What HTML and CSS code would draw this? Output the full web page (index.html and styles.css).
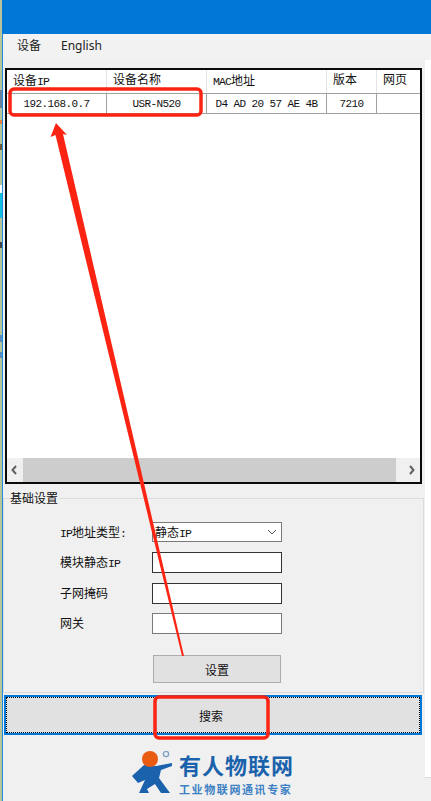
FILE: index.html
```html
<!DOCTYPE html>
<html lang="zh-CN">
<head>
<meta charset="utf-8">
<title>USR-M0</title>
<link rel="stylesheet" href="styles.css">
</head>
<body>
<div class="screen">
  <div class="desktop"></div>
  <div class="window">
    <header class="titlebar"></header>
    <nav class="menubar"><span class="menu-item">设备</span><span class="menu-item">English</span></nav>
    <section class="list">
      <div class="row head">
        <span class="c c1">设备<span class="lat">IP</span></span><span class="c c2">设备名称</span><span class="c c3"><span class="lat">MAC</span>地址</span><span class="c c4">版本</span><span class="c c5">网页</span>
      </div>
      <div class="row data">
        <span class="c c1 mid">192.168.0.7</span><span class="c c2 mid">USR-N520</span><span class="c c3 mid">D4 AD 20 57 AE 4B</span><span class="c c4 mid">7210</span><span class="c c5"></span>
      </div>
      <div class="list-body"></div>
      <div class="hscroll">
        <svg class="sb-left" viewBox="0 0 16 24" width="16" height="24"><path d="M9 8 L5.500 12 L9 16" fill="none" stroke="#606060" stroke-width="2"/></svg>
        <div class="sb-track"></div>
        <svg class="sb-right" viewBox="0 0 24 24" width="24" height="24"><path d="M14 8 L17.500 12 L14 16" fill="none" stroke="#606060" stroke-width="2"/></svg>
      </div>
    </section>
    <fieldset class="group">
      <legend class="group-title">基础设置</legend>
      <div class="form">
        <label class="lbl"><span class="lat">IP</span>地址类型<span class="lat">:</span></label>
        <div class="field select"><span>静态<span class="lat">IP</span></span><svg class="chev" viewBox="0 0 10 6" width="10" height="6"><path d="M1 1 L5 5 L9 1" fill="none" stroke="#555" stroke-width="1"/></svg></div>
        <label class="lbl">模块静态<span class="lat">IP</span></label>
        <div class="field dark"></div>
        <label class="lbl">子网掩码</label>
        <div class="field dark"></div>
        <label class="lbl">网关</label>
        <div class="field"></div>
      </div>
      <button class="btn set" type="button">设置</button>
    </fieldset>
    <button class="btn search" type="button"><span class="focus">搜索</span></button>
    <footer class="brand">
      <svg class="logo" viewBox="0 0 41 43" width="41" height="43">
        <path d="M0 25 L12 14 L24 15 L40 12 L40 15 L29 19 L27 27 L38 42 L29 42 L23 33 L15 38 L17 42 L7 42 L13 29 L6 32 Z" fill="#1a62ac"/>
        <circle cx="18" cy="8" r="8" fill="#ea5b12"/>
        <circle cx="34" cy="3" r="2.600" fill="none" stroke="#7f9fc8" stroke-width="1.400"/>
      </svg>
      <div class="brand-text">
        <div class="brand-name">有人物联网</div>
        <div class="brand-sub">工业物联网通讯专家</div>
      </div>
    </footer>
  </div>
  <div class="gutter">
    <div class="gutter-title"></div>
    <div class="gutter-menu"></div>
    <div class="gutter-blank"></div>
  </div>
</div>
<svg class="notes" viewBox="0 0 431 801" width="431" height="801">
  <rect x="10" y="89" width="191" height="26" rx="4" fill="none" stroke="#fb2412" stroke-width="3.500"/>
  <rect x="155" y="697" width="113" height="41" rx="4" fill="none" stroke="#fb2412" stroke-width="3.500"/>
  <path d="M56 123 L50.500 137 L55.500 135 L182 656 L184 656 L63 134 L67 135 Z" fill="#fb2412"/>
</svg>
</body>
</html>
```
FILE: styles.css
```css
html, body { margin: 0; padding: 0; background: #f0f0f0; }
body { width: 431px; height: 801px; overflow: hidden; position: relative; font-family: "Liberation Sans", "Noto Sans CJK SC", sans-serif; }
.screen { display: flex; width: 431px; height: 801px; }
.desktop { width: 2px; flex: none; background: linear-gradient(to bottom, #b8c49a 0 90px, #6b7f9a 90px 108px, #b8c49a 108px 120px, #e8803a 120px 124px, #b8c49a 124px 144px, #6a5a3a 144px 150px, #b8c49a 150px 185px, #ffffff 185px 193px, #10c0e0 193px 218px, #b8c49a 218px 242px, #444444 242px 248px, #b8c49a 248px 335px, #5a8ac0 335px 342px, #b8c49a 342px 352px, #5a8ac0 352px 358px, #b8c49a 358px); }
.window { width: 422px; height: 801px; flex: none; border-left: 1px solid #1b8ce0; background: #f0f0f0; display: flex; flex-direction: column; }
.titlebar { height: 34px; margin-left: -1px; background: #0078d7; flex: none; }
.menubar { height: 24px; background: #f2f2f2; display: flex; align-items: center; gap: 20px; padding-left: 14px; font: 12px "Noto Sans", "Noto Sans CJK SC", sans-serif; color: #222; flex: none; }
.menu-item { line-height: 22px; margin-bottom: 1px; }
.gutter { flex: 1; display: flex; flex-direction: column; }
.gutter-title { height: 34px; background: #0078d7; }
.gutter-menu { height: 26px; background: #f2f2f2; }
.gutter-blank { height: 717px; background: #fff; border-bottom: 1px solid #d8d8d8; }
.list { margin: 10px 0 0 2px; width: 413px; height: 412px; border: 2px solid #0a0a0a; background: #fff; display: flex; flex-direction: column; flex: none; }
.row { display: flex; flex: none; font: 11px "Liberation Mono", "Noto Sans CJK SC", monospace; color: #111; }
.head { height: 23px; border-bottom: 1px solid #a0a0a0; }
.data { height: 19px; border-bottom: 1px solid #a0a0a0; }
.c { box-sizing: border-box; padding-left: 6px; white-space: nowrap; overflow: hidden; line-height: 19px; border-right: 1px solid #e4e4e4; flex: none; }
.data .c { border-right-color: #a0a0a0; line-height: 21px; letter-spacing: -0.600px; }
.c1 { width: 100px; }
.c2 { width: 100px; }
.c3 { width: 120px; }
.c4 { width: 50px; }
.c5 { width: 43px; border-right: 0; }
.head .c { font-size: 12px; padding-top: 2px; }
.lat { font-family: "Liberation Mono", monospace; font-size: 11.500px; letter-spacing: -0.900px; }
.mid { text-align: center; padding-left: 0; }
.list-body { flex: 1; }
.hscroll { height: 24px; display: flex; background: #f0f0f0; flex: none; }
.sb-left, .sb-right { flex: none; }
.sb-track { flex: 1; background: #cdcdcd; }
.group { margin: 7px 0 0 0; padding: 0; width: 421px; box-sizing: border-box; height: 202px; border: 1px solid #dcdcdc; flex: none; min-width: 0; }
.group-title { margin-left: 6px; padding: 0 2px 0 0; font: 12px/14px "Noto Sans CJK SC", sans-serif; color: #111; }
.form { display: grid; grid-template-columns: 92px 130px; grid-auto-rows: 21px; row-gap: 9.400px; padding: 17px 0 0 56px; font: 12px/19px "Noto Sans CJK SC", sans-serif; color: #111; }
.lbl { white-space: nowrap; }
.field { box-sizing: border-box; height: 21px; background: #fff; border: 1px solid #7a7a7a; display: flex; align-items: center; justify-content: space-between; padding: 0 4px 0 2px; }
.select { height: 20px; }
.dark { border-color: #333; }
.chev { flex: none; }
.btn { font: 12px "Noto Sans CJK SC", sans-serif; color: #111; background: #e1e1e1; border: 1px solid #adadad; padding: 0; display: block; }
.set { width: 128px; height: 28px; margin: 21px 0 0 149px; }
.search { width: 418px; height: 40px; margin: 2px 0 0 1px; border: 2px solid #0078d7; box-sizing: border-box; flex: none; }
.focus { display: flex; align-items: center; justify-content: center; height: 100%; border: 1px dotted #000; box-sizing: border-box; padding-right: 4px; }
.brand { display: flex; align-items: flex-start; gap: 6px; margin: 16px 0 0 129px; flex: none; }
.logo { flex: none; }
.brand-text { display: flex; flex-direction: column; }
.brand-name { font: 700 22px/26px "Noto Sans CJK SC", sans-serif; color: #1a62ac; letter-spacing: 1px; white-space: nowrap; }
.brand-sub { font: 700 11px/16px "Noto Sans CJK SC", sans-serif; color: #3d80c4; letter-spacing: 1.600px; white-space: nowrap; margin-top: 4px; }
.notes { position: absolute; left: 0; top: 0; pointer-events: none; }
```
